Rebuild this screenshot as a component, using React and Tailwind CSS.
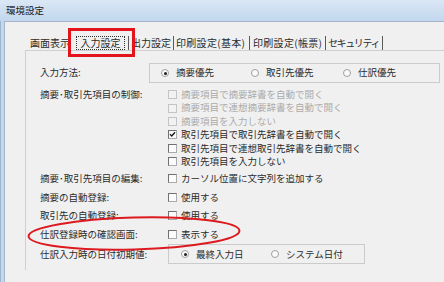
import React from "react";

const Checkbox = ({ checked, disabled }) => (
  <span
    className={`w-[9px] h-[9px] shrink-0 flex items-center justify-center border ${
      disabled
        ? "border-[#c4c4c4] bg-[#f2f2f2]"
        : "border-t-[#707070] border-l-[#707070] border-r-[#ababab] border-b-[#ababab] bg-[#fbfbfb]"
    }`}
  >
    {checked && (
      <svg width="7" height="7" viewBox="0 0 7 7">
        <path d="M1 3.2 L2.8 5 L6 1.2" stroke="#1a1a1a" strokeWidth="1.4" fill="none" />
      </svg>
    )}
  </span>
);

const CheckRow = ({ text, checked, disabled, className = "" }) => (
  <div className={`flex items-center gap-[4px] h-[13.4px] ${className}`}>
    <Checkbox checked={checked} disabled={disabled} />
    <span className={disabled ? "text-[#ababab]" : "text-[#2b2b2b]"}>{text}</span>
  </div>
);

const Radio = ({ checked, text, className = "" }) => (
  <div className={`flex items-center gap-[7px] ${className}`}>
    <span className="w-[8px] h-[8px] shrink-0 rounded-full border border-[#a0a0a0] bg-[#fafafa] flex items-center justify-center">
      {checked && <span className="w-[3px] h-[3px] rounded-full bg-[#1e1e1e]" />}
    </span>
    <span>{text}</span>
  </div>
);

const Sep = ({ className = "" }) => <span className={`w-px h-[14px] bg-[#5a5a5a] shrink-0 ${className}`} />;

export default function App() {
  return (
    <div className="relative w-[444px] h-[282px] overflow-hidden bg-[#f0f0f0] font-['Noto_Sans_CJK_JP',sans-serif] text-[#2b2b2b] leading-none">
      {/* title bar */}
      <div className="h-[21px] bg-linear-to-b from-[#dae7f5] to-[#c2d7ee] flex items-center pl-[6px] text-[9.5px] text-[#1a1a1a]">
        環境設定
      </div>

      <div className="flex h-[261px]">
        <div className="w-[4px] bg-[#c3d7ed] border-l border-[#9fb5cc]" />
        <div className="flex-1 border-l border-t border-[#a6b6c8] pt-[14px]">
          {/* tabs */}
          <div className="flex items-center h-[14px] pl-[25px] text-[10px] whitespace-nowrap">
            <span className="w-[40px]">画面表示</span>
            <span className="ml-[6px] w-[49px] h-[14px] border border-dotted border-[#333] flex items-center justify-center">
              入力設定
            </span>
            <Sep className="ml-[3px]" />
            <span className="ml-[2px] w-[40px]">出力設定</span>
            <Sep className="ml-[2px]" />
            <span className="ml-[2px] w-[71px] tracking-[0.3px]">印刷設定(基本)</span>
            <Sep className="ml-[2px]" />
            <span className="ml-[3px] w-[70px] tracking-[0.3px]">印刷設定(帳票)</span>
            <Sep className="ml-[2px]" />
            <span className="ml-[2px] w-[52px] tracking-[-1.4px]">セキュリティ</span>
            <Sep className="ml-[2px]" />
          </div>

          {/* panel */}
          <div className="ml-[20px] h-[220px] border-l border-t border-[#cfcfcf] pl-[14px] pt-[12px] text-[9.5px] whitespace-nowrap">
            <div className="flex items-center h-[20px]">
              <span className="w-[109px]">入力方法:</span>
              <div className="w-[291px] h-[20px] border border-[#cbcbcb] flex items-center pl-[11px]">
                <Radio checked text="摘要優先" className="w-[90px]" />
                <Radio text="取引先優先" className="w-[92px]" />
                <Radio text="仕訳優先" />
              </div>
            </div>

            <div className="flex mt-[5px]">
              <div className="w-[128px] h-[13.4px] flex items-center">摘要･取引先項目の制御:</div>
              <div className="flex flex-col">
                <CheckRow disabled text="摘要項目で摘要辞書を自動で開く" />
                <CheckRow disabled text="摘要項目で連想摘要辞書を自動で開く" />
                <CheckRow disabled text="摘要項目を入力しない" />
                <CheckRow checked text="取引先項目で取引先辞書を自動で開く" />
                <CheckRow text="取引先項目で連想取引先辞書を自動で開く" />
                <CheckRow text="取引先項目を入力しない" />
              </div>
            </div>

            <div className="flex items-center h-[14px] mt-[3px]">
              <span className="w-[128px]">摘要･取引先項目の編集:</span>
              <CheckRow text="カーソル位置に文字列を追加する" />
            </div>
            <div className="flex items-center h-[14px] mt-[5px]">
              <span className="w-[128px]">摘要の自動登録:</span>
              <CheckRow text="使用する" />
            </div>
            <div className="flex items-center h-[14px] mt-[4px]">
              <span className="w-[128px]">取引先の自動登録:</span>
              <CheckRow text="使用する" />
            </div>
            <div className="flex items-center h-[14px] mt-[5px]">
              <span className="w-[128px]">仕訳登録時の確認画面:</span>
              <CheckRow text="表示する" />
            </div>
            <div className="flex items-center h-[20px] mt-[3px]">
              <span className="w-[128px]">仕訳入力時の日付初期値:</span>
              <div className="w-[197px] h-[20px] border border-[#cbcbcb] flex items-center pl-[12px]">
                <Radio checked text="最終入力日" className="w-[90px]" />
                <Radio text="システム日付" className="gap-[2px]" />
              </div>
            </div>
          </div>
        </div>
      </div>

      {/* annotations */}
      <div className="absolute left-[68px] top-[28px] w-[67px] h-[29px] border-[3px] border-[#e3141b]" />
      <svg className="absolute left-0 top-0 pointer-events-none" width="444" height="282">
        <ellipse
          cx="134"
          cy="233.5"
          rx="105.5"
          ry="16"
          transform="rotate(-1.5 134 233.5)"
          fill="none"
          stroke="#dd1a1f"
          strokeWidth="2"
        />
      </svg>
    </div>
  );
}
